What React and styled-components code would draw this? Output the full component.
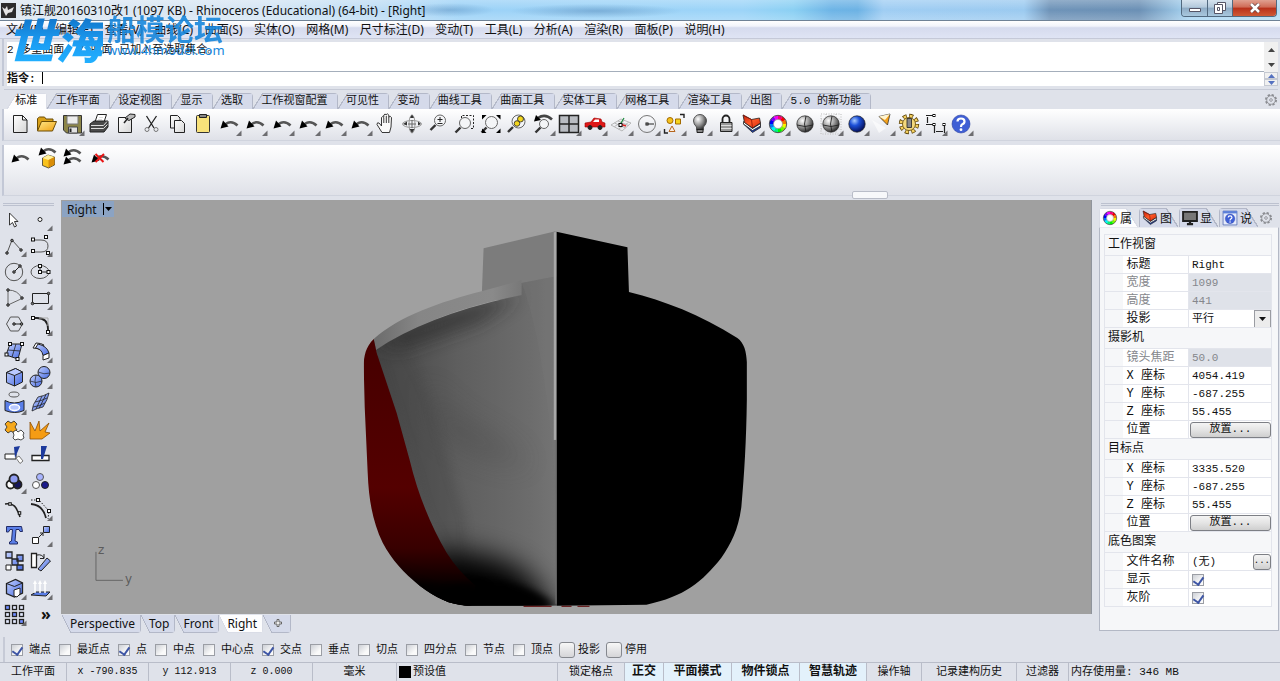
import React, { useState } from 'react'
import styled, { createGlobalStyle, css } from 'styled-components'

const ui = '"Noto Sans", "Noto Sans CJK SC", sans-serif'
const song = '"Liberation Mono", "Noto Sans CJK SC", monospace'

const colors = {
  chrome: '#dfe2ea',
  line: '#b3b8c8',
  tab: '#d5daea',
  ink: '#111',
  blue: '#5b7fe8',
}

const GlobalStyle = createGlobalStyle`
  * {
    box-sizing: border-box;
  }

  body {
    margin: 0;
    background: ${colors.chrome};
    color: ${colors.ink};
    font-family: ${song};
    font-size: 11px;
    overflow: hidden;
  }

  button, input {
    font: inherit;
    color: inherit;
    margin: 0;
    padding: 0;
  }

  button {
    border: 0;
    background: none;
  }
`

const Page = styled.div`
  position: relative;
  display: flex;
  flex-direction: column;
  height: 100vh;
`

const TitleBar = styled.header`
  flex: 0 0 21px;
  display: flex;
  align-items: center;
  gap: 4px;
  padding-left: 1px;
  border-bottom: 1px solid #6f8296;
  font-family: ${ui};
  font-size: 12px;
  background:
    radial-gradient(ellipse at center, rgba(70, 120, 170, 0.35), transparent 70%) 34% 50% / 90px 14px no-repeat,
    radial-gradient(ellipse at center, rgba(70, 120, 170, 0.4), transparent 72%) 46% 60% / 170px 14px no-repeat,
    linear-gradient(rgba(255, 255, 255, 0.25), rgba(255, 255, 255, 0) 50%, rgba(255, 255, 255, 0.2)),
    linear-gradient(90deg, #dde7f0 0%, #d6e6f4 20%, #bcdcf5 30%, #9cd2f7 36%, #9cd4f8 58%, #8bd0f3 62%, #6db4e6 65%, #6cb2e4 67%, #9fcdf3 69%, #9bcaf0 80%, #6e93b8 82%, #6b90b5 89%, #a8d5f3 93%, #b5dcf3 100%);
`

const Title = styled.h1`
  flex: 1;
  margin: 0;
  font-size: 12px;
  font-weight: 400;
  white-space: nowrap;
`

const WindowButtons = styled.div`
  align-self: flex-start;
  display: flex;
  margin-right: 3px;
  border: 1px solid #51697f;
  border-top: 0;
  border-radius: 0 0 4px 4px;
  overflow: hidden;
`

const WindowButton = styled.button`
  width: ${p => (p.$close ? '44px' : '25px')};
  height: 16px;
  display: flex;
  align-items: center;
  justify-content: center;
  border-left: ${p => (p.$first ? '0' : '1px solid #51697f')};
  background: ${p =>
    p.$close
      ? 'linear-gradient(#e0a090, #cf6a55 45%, #b8301a 50%, #cf5a35)'
      : 'linear-gradient(#d5e2ee, #b3c9dc 45%, #8eabc5 50%, #a9c8de)'};
`

const MenuBar = styled.nav`
  flex: 0 0 18px;
  border-bottom: 1px solid #c5c9d8;
  background: linear-gradient(#fff, #f2f4fb 30%, #d6dbee 40%, #dfe4f4);
`

const MenuList = styled.div`
  display: flex;
  justify-content: space-between;
  width: 57%;
  padding: 0 5px 0 6px;
`

const MenuItem = styled.button`
  font-family: ${ui};
  font-size: 12px;
  line-height: 17px;
  white-space: nowrap;
`

const CommandArea = styled.section`
  flex: 0 0 45px;
  display: flex;
  margin-left: 2px;
  padding: 3px 2px 0 3px;
  border-left: 2px solid #c3c8d6;
  font-family: ${song};
  line-height: 14px;
`

const CommandText = styled.div`
  flex: 1;
  display: flex;
  flex-direction: column;
  background: #fff;
`

const History = styled.div`
  flex: 0 0 30px;
  padding-top: 1px;
  border-bottom: 1px solid #a4aebb;
`

const Prompt = styled.label`
  display: flex;
  gap: 6px;
  height: 14px;
  font-weight: 700;

  input {
    flex: 1;
    border: 0;
    outline: 0;
    background: none;
    font-weight: 400;
  }
`

const Caret = styled.span`
  width: 1px;
  height: 12px;
  background: #000;
`

const ScrollColumn = styled.div`
  flex: 0 0 14px;
  display: flex;
  flex-direction: column;
  background: #f0f0f0;
`

const ScrollButton = styled.button`
  flex: 1 1 ${p => (p.$small ? '7px' : '15px')};
  display: flex;
  align-items: center;
  justify-content: center;
  color: ${p => (p.$small ? '#5571c0' : '#444')};
  border: ${p => (p.$small ? '1px solid #c5c9d2' : '0')};

  svg {
    width: 7px;
    height: 4px;
  }
`

const TabBar = styled.div`
  flex: 0 0 23px;
  display: flex;
  justify-content: space-between;
  align-items: flex-end;
  margin: 0 2px;
  padding: 4px 0 0 3px;
  border-left: 2px solid transparent;
  box-shadow: inset 0 3px ${colors.chrome}, inset 0 4px #c6cad6;
`

const Tabs = styled.div`
  display: flex;
  width: 68%;
`

const slanted = css`
  --fill: ${p => (p.$active ? '#fdfdfe' : colors.tab)};
  --line: ${p => (p.$active ? '#d9dce6' : colors.line)};
`

const Tab = styled.button`
  ${slanted}
  flex: 1 1 auto;
  height: 16px;
  padding: 0 10px 0 8px;
  line-height: 16px;
  white-space: nowrap;
  border-radius: 0 4px 0 0;
  background:
    linear-gradient(to bottom right, transparent 46%, var(--line) 47% 53%, var(--fill) 54%) 0 0 / 10px 100% no-repeat,
    linear-gradient(var(--line), var(--line)) 10px 0 / 100% 1px no-repeat,
    linear-gradient(var(--line), var(--line)) 100% 0 / 1px 100% no-repeat,
    linear-gradient(var(--fill), var(--fill)) 10px 0 no-repeat;
`

const GearButton = styled.button`
  width: 14px;
  height: 14px;
  align-self: center;

  svg {
    display: block;
    width: 14px;
    height: 14px;
  }
`

const Toolbar = styled.div`
  position: relative;
  flex: 0 0 ${p => p.$height}px;
  margin: 0 0 4px 2px;
  padding: ${p => p.$top}px 0 0 3px;
  border-left: 2px solid #c3c8d6;
  border-bottom: 1px solid #d0d4de;
  background: linear-gradient(#fff, #f2f3f6 40%, #dfe1e8);
`

const ToolRow = styled.div`
  display: grid;
  grid-template-columns: repeat(37, 1fr);
  width: 76%;
`

const ToolButton = styled.button`
  display: flex;
  align-items: center;
  justify-content: center;

  svg {
    width: 26px;
    height: 26px;
  }
`

const Knob = styled.div`
  position: absolute;
  left: 66%;
  bottom: -4px;
  width: 36px;
  height: 8px;
  margin-left: 6px;
  border: 1px solid #b9bdc8;
  border-radius: 2px;
  background: #f7f8fa;
`

const Body = styled.main`
  flex: 1;
  min-height: 0;
  display: flex;
`

const Palette = styled.aside`
  flex: 0 0 61px;
  padding: 3px 7px 10px 1px;
  display: flex;
  flex-direction: column;
`

const Grip = styled.div`
  height: 3px;
  margin-left: 2px;
  border: 1px solid #bcc1cf;
  border-width: 1px 0;
`

const PaletteGrid = styled.div`
  flex: 1;
  display: grid;
  grid-template-columns: 26px 26px;
  grid-template-rows: repeat(16, 1fr);
`

const More = styled.button`
  padding-left: 12px;
  font-family: ${ui};
  font-size: 16px;
  font-weight: 700;
  line-height: 20px;
`

const Center = styled.section`
  flex: 1;
  min-width: 0;
  display: flex;
  flex-direction: column;
`

const Viewport = styled.div`
  position: relative;
  flex: 1;
  min-height: 0;
  border-right: 1px solid #8f949c;
  background: #a0a0a0;

  > svg {
    display: block;
    width: 100%;
    height: 100%;
  }
`

const ViewportTitle = styled.button`
  position: absolute;
  top: 1px;
  left: 1px;
  display: flex;
  align-items: center;
  gap: 6px;
  height: 16px;
  padding: 0 2px 0 5px;
  background: #8ba3c3;
  font-family: ${ui};
  font-size: 12px;

  svg {
    width: 9px;
    height: 12px;
  }
`

const ViewTabs = styled.div`
  flex: 0 0 23px;
  display: flex;
  padding: 1px 0 4px 1px;
`

const ViewTab = styled.button`
  ${slanted}
  padding: 0 6px 0 8px;
  font-family: ${ui};
  font-size: 12px;
  line-height: 18px;
  border-radius: 0 0 4px 0;
  background:
    linear-gradient(to top right, transparent 46%, var(--line) 47% 53%, var(--fill) 54%) 0 0 / 9px 100% no-repeat,
    linear-gradient(var(--line), var(--line)) 9px 100% / 100% 1px no-repeat,
    linear-gradient(var(--line), var(--line)) 100% 0 / 1px 100% no-repeat,
    linear-gradient(var(--fill), var(--fill)) 9px 0 no-repeat;
`

const Side = styled.aside`
  flex: 0 0 188px;
  padding: 3px 1px 6px 7px;
  display: flex;
  flex-direction: column;
`

const SideTabs = styled.div`
  display: flex;
  gap: 1px;
  padding-top: 2px;
`

const SideTab = styled.button`
  ${slanted}
  flex: 0 0 39px;
  display: flex;
  align-items: center;
  height: 19px;
  padding-left: 1px;
  font-size: 12px;
  white-space: nowrap;
  border-radius: 4px 0 0 0;
  background:
    linear-gradient(to bottom left, transparent 46%, var(--line) 47% 53%, var(--fill) 54%) 100% 0 / 12px 100% no-repeat,
    linear-gradient(var(--line), var(--line)) 0 0 / calc(100% - 12px) 1px no-repeat,
    linear-gradient(var(--line), var(--line)) 0 0 / 1px 100% no-repeat,
    linear-gradient(var(--fill), var(--fill)) 0 0 / calc(100% - 12px) 100% no-repeat;

  svg {
    flex: none;
    width: 20px;
    height: 20px;
  }
`

const Panel = styled.div`
  flex: 1;
  padding: 6px 6px 0 4px;
  border: 1px solid #b3b8c5;
  border-top-color: #e8eaf0;
  background: #f6f7f9;
`

const Table = styled.table`
  width: 100%;
  table-layout: fixed;
  border-collapse: collapse;
  border: 1px solid #e3e5ec;
  font-size: 12px;

  col:first-child {
    width: 18px;
  }

  col:nth-child(2) {
    width: 66px;
  }
`

const GroupHead = styled.th`
  height: 21px;
  padding: 0 0 0 3px;
  text-align: left;
  font-weight: 400;
  line-height: 18px;
`

const Row = styled.tr`
  height: 18px;
  color: ${p => (p.$muted ? '#85878c' : colors.ink)};

  td,
  th {
    height: 18px;
    padding: 0;
    border: 1px solid #e3e5ec;
    background: #fff;
    font-weight: 400;
    line-height: 16px;
    text-align: left;
    white-space: nowrap;
  }

  td:first-child {
    border-right: 0;
    background: #f6f7f9;
  }

  th {
    padding-left: 4px;
    border-left: 0;
  }

  td:last-child {
    background: ${p => (p.$muted ? '#dfe2e9' : '#fff')};
    font-size: 11px;
  }
`

const Value = styled.div`
  display: flex;
  align-items: center;
  height: 17px;
  padding-left: ${p => (p.$flush ? '1px' : '3px')};

  input[type='text'] {
    width: 100%;
    min-width: 0;
    border: 0;
    background: none;
  }
`

const PushButton = styled.button`
  flex: ${p => (p.$small ? '0 0 17px' : '1')};
  height: 16px;
  border: 1px solid #7d7f85;
  border-radius: 3px;
  background: linear-gradient(#f4f4f4, #e4e4e4 50%, #cfcfcf);
  font-size: ${p => (p.$small ? '9px' : '11px')};
  line-height: 13px;
`

const Select = styled.select`
  flex: 1;
  height: 17px;
  padding: 0;
  border: 0;
  appearance: none;
  background: none;
  font: inherit;
  color: inherit;
`

const SelectArrow = styled.span`
  flex: 0 0 17px;
  height: 17px;
  display: flex;
  align-items: center;
  justify-content: center;
  border: 1px solid #9a9ca2;
  border-width: 1px 1px 0 1px;
  background: #ececec;

  svg {
    width: 7px;
    height: 4px;
  }
`

const Check = styled.input.attrs({ type: 'checkbox' })`
  flex: none;
  width: ${p => (p.$big ? '16px' : '12px')};
  height: ${p => (p.$big ? '16px' : '12px')};
  appearance: none;
  display: grid;
  place-items: center;
  border: 1px solid ${p => (p.$big ? '#85888e' : '#9b9ea5')};
  border-radius: ${p => (p.$big ? '3px' : '0')};
  background: ${p =>
    p.$big
      ? 'linear-gradient(#f7f7f7, #d5d5d8)'
      : 'linear-gradient(135deg, #cdd0d6, #fafafa 70%)'};

  &:checked::after {
    content: '';
    width: 5px;
    height: 8px;
    margin-bottom: 2px;
    border: solid #3d55a5;
    border-width: 0 2px 2px 0;
    transform: rotate(35deg);
  }
`

const OsnapBar = styled.div`
  flex: 0 0 25px;
  display: flex;
  align-items: center;
  gap: 8px;
  margin-left: 3px;
  padding: 1px 0 0 6px;
  border-left: 2px solid #c6cad6;
`

const OsnapLabel = styled.label`
  display: flex;
  align-items: center;
  gap: ${p => (p.$big ? '3px' : '6px')};
  margin-left: ${p => (p.$big ? '-2px' : '0')};
  line-height: 16px;
  white-space: nowrap;
`

const StatusBar = styled.footer`
  flex: 0 0 18px;
  display: flex;
  border-top: 1px solid #b9bdc9;
  line-height: 18px;
`

const StatusCell = styled.div`
  flex: ${p => (p.$grow ? '1 1' : '0 0')} ${p => p.$width}px;
  display: flex;
  justify-content: ${p => (p.$left ? 'flex-start' : 'center')};
  align-items: center;
  gap: 2px;
  padding-left: ${p => (p.$left ? '2px' : '0')};
  border-right: ${p => (p.$grow ? '0' : '1px solid #b9bdc9')};
  font-size: ${p => (p.$on ? '12px' : p.$coord ? '10px' : '11px')};
  font-weight: ${p => (p.$on ? 700 : 400)};
  background: ${p => (p.$on ? '#e3f1fb' : 'none')};
  white-space: pre;
`

const Swatch = styled.span`
  width: 12px;
  height: 12px;
  background: #000;
`

const Watermark = styled.div`
  position: absolute;
  top: 13px;
  left: 7px;
  display: flex;
  gap: 4px;
  pointer-events: none;
  font-family: 'Noto Sans CJK SC', sans-serif;
  color: #1787dc;
`

const Brush = styled.span`
  font-size: 48px;
  font-weight: 900;
  line-height: 50px;
  font-style: italic;
  color: transparent;
  background: linear-gradient(#0f6fc4, #1c9df3 60%, #22b0ff);
  background-clip: text;
`

const Forum = styled.div`
  font-size: 29px;
  font-weight: 700;
  line-height: 30px;
  opacity: 0.9;
`

const Site = styled.div`
  font-family: ${ui};
  font-size: 13px;
  line-height: 15px;
`

/* ---------- drawings ---------- */

const Flag = () => <path d="M25.500 19.500V25H20z" fill="#6d6d70" />

const Icon = ({ flag, children }) => (
  <svg viewBox="0 0 26 26" fill="none" stroke="#222" strokeWidth="1">
    {children}
    {flag ? (
      <g stroke="none">
        <Flag />
      </g>
    ) : null}
  </svg>
)

const Defs = () => (
  <svg width="0" height="0" style={{ position: 'absolute' }} aria-hidden="true">
    <defs>
      <radialGradient id="ballGray" cx="0.35" cy="0.3" r="0.75">
        <stop offset="0" stopColor="#fff" />
        <stop offset="0.5" stopColor="#999" />
        <stop offset="1" stopColor="#222" />
      </radialGradient>
      <radialGradient id="ballBlue" cx="0.35" cy="0.3" r="0.75">
        <stop offset="0" stopColor="#a8cbff" />
        <stop offset="0.4" stopColor="#1c50d8" />
        <stop offset="1" stopColor="#020a50" />
      </radialGradient>
      <linearGradient id="steel" x1="0" y1="0" x2="1" y2="1">
        <stop offset="0" stopColor="#c4d2ff" />
        <stop offset="1" stopColor="#4468e0" />
      </linearGradient>
      <linearGradient id="paper" x1="0" y1="0" x2="1" y2="1">
        <stop offset="0" stopColor="#fff" />
        <stop offset="1" stopColor="#d5d5d5" />
      </linearGradient>
      <linearGradient id="gold" x1="0" y1="0" x2="1" y2="1">
        <stop offset="0" stopColor="#ffe98a" />
        <stop offset="1" stopColor="#f0a010" />
      </linearGradient>
      <linearGradient id="ember" x1="0" y1="0" x2="1" y2="1">
        <stop offset="0" stopColor="#c41c08" />
        <stop offset="0.5" stopColor="#ff5a28" />
        <stop offset="1" stopColor="#d82a0c" />
      </linearGradient>
    </defs>
  </svg>
)

const Undo = ({ x = 0, y = 0 }) => (
  <g transform={`translate(${x} ${y})`}>
    <path d="M9 14C12 10.500 17 10 21.500 14.500" stroke="#555" strokeWidth="2.600" />
    <path d="M4.500 17.500L7 9.500L12.500 15.500z" fill="#000" stroke="none" />
  </g>
)

const Lens = ({ cx = 15, cy = 10, r = 5.5 }) => (
  <>
    <circle cx={cx} cy={cy} r={r} fill="#f4f5f7" stroke="#666" />
    <path d={`M${cx - r + 1} ${cy + r - 1}L${cx - r - 4} ${cy + r + 4}`} strokeWidth="2.400" stroke="#333" />
  </>
)

const hues = [0, 30, 60, 90, 120, 150, 180, 210, 240, 270, 300, 330]

const Wheel = () => (
  <g>
    {hues.map(h => (
      <circle
        key={h}
        cx="13"
        cy="13"
        r="6.500"
        stroke={`hsl(${h} 100% 48%)`}
        strokeWidth="4"
        strokeDasharray="3.600 60"
        transform={`rotate(${h - 60} 13 13)`}
      />
    ))}
    <circle cx="13" cy="13" r="8.700" stroke="#333" strokeWidth="0.800" />
    <circle cx="13" cy="13" r="4.500" fill="#fff" stroke="#666" strokeWidth="0.500" />
  </g>
)

const Layers = () => (
  <g strokeWidth="0.800">
    <path d="M4.500 13l9 8.500 8-5v-4l-8 4z" fill="#1d3da5" />
    <path d="M4.500 10.500l9 7 8-5v2.500l-8 4.500-9-6.500z" fill="#fff" />
    <path d="M4 4l8.500 4.500 8-1.500 1 5-8 5-8-5.500z" fill="url(#ember)" />
    <path d="M4 4l8.500 4.500 1 8.500" stroke="#8a1204" />
  </g>
)

const Ball = ({ fill = 'url(#ballGray)', lines }) => (
  <>
    <circle cx="13" cy="13" r="8.200" fill={fill} stroke="#222" strokeWidth="0.700" />
    {lines && <path d="M5 14Q13 17 21 14M14 5Q11 13 14 21" stroke="#222" strokeWidth="0.900" />}
  </>
)

const Gear = ({ color = '#8b8d92', fill = 'none' }) => (
  <g stroke={color} fill={fill}>
    <circle cx="13" cy="13" r="9.500" strokeWidth="3.500" strokeDasharray="4.200 3.260" />
    <circle cx="13" cy="13" r="8" strokeWidth="1.500" />
    <circle cx="13" cy="13" r="2.500" strokeWidth="1.500" />
  </g>
)

const Help = () => (
  <>
    <circle cx="13" cy="13" r="9" fill="#3f5fd5" stroke="#2a3fa0" strokeWidth="0.600" />
    <path d="M9.500 10.500Q9.500 7.500 13 7.500T16.500 10.500Q16.500 12.500 14 13.500Q13 14 13 16" stroke="#fff" strokeWidth="2.200" />
    <circle cx="13" cy="18.700" r="1.400" fill="#fff" stroke="none" />
  </>
)

const Pts = ({ at, s = 3 }) =>
  at.map(([x, y], i) => (
    <rect key={i} x={x - s / 2} y={y - s / 2} width={s} height={s} fill="#fff" stroke="#111" />
  ))

const Dots = ({ at }) =>
  at.map(([x, y], i) => <circle key={i} cx={x} cy={y} r="1.300" fill="#777" stroke="#111" strokeWidth="0.800" />)

const tools = [
  ['新建', 0, <path d="M6.500 4.500h9l4.500 4.500v12.500H6.500zM15.500 4.500v4.500H20" fill="url(#paper)" />],
  ['打开', 0, <>
    <path d="M4.500 19.500v-12l2-1.500h5l1.500 2h7v4" fill="#d9a018" stroke="#6b4c05" />
    <path d="M4.500 20l4-9.500H23.500l-4 9.500z" fill="url(#gold)" stroke="#6b4c05" />
  </>],
  ['保存', 1, <>
    <path d="M4.500 4.500h18v17.500h-15l-3-3z" fill="#8c8548" stroke="#333" />
    <path d="M8 5h11v8H8z" fill="#ececec" stroke="#777" />
    <path d="M9.500 16h9v6h-9z" fill="#e2e2e2" stroke="#444" />
    <path d="M11.500 17.500v3.500" strokeWidth="2" />
  </>],
  ['打印', 0, <>
    <path d="M9 11l2.500-7.500h9L18 11z" fill="#fff" />
    <path d="M4 13l4-3h14v6l-4 5H4z" fill="#4a4a4a" />
    <path d="M5 14.500h12.500l3.500-4M5 17.500h12.500l4-4M13 6.500h4M12 8.500h4" stroke="#ddd" />
  </>],
  ['属性', 0, <>
    <path d="M6.500 6.500h13v15h-13z" fill="url(#paper)" />
    <path d="M13 7l5-4 5 .5v2.500l-6 3.500-2-1z" fill="#bbb" />
    <path d="M12 12l4-5" strokeWidth="1.500" />
  </>],
  ['剪切', 0, <>
    <path d="M8.500 5l7.500 12M18.500 5l-8 12" strokeWidth="1.300" />
    <circle cx="9" cy="18.500" r="2" stroke="#777" />
    <circle cx="18" cy="18.500" r="2" stroke="#777" />
  </>],
  ['复制', 0, <>
    <path d="M6.500 4.500h7l2.500 2.500v10H6.500z" fill="url(#paper)" />
    <path d="M10.500 9.500h7l3 3v9h-10z" fill="url(#paper)" />
  </>],
  ['粘贴', 0, <>
    <rect x="6.500" y="4.500" width="13" height="17" rx="1" fill="#f8e27a" stroke="#333" />
    <path d="M9.500 3.500h7v3h-7z" fill="#888" />
  </>],
  ...['复原', '重做', '多次复原', '多次重做', '复原选取', '重复'].map(n => [n, 1, <Undo />]),
  ['平移', 0, <path d="M9 21.500L4 13.500q0-2.500 2-1.500l2.500 3V6.500q1.200-2 2.300 0V4q1.200-2 2.500 0v-.5q1.300-1.500 2.500.5v2q1.500-1.500 2.700.5l-.5 9.500-1.500 5.500zM10.800 7v5M13.300 5v7M15.800 6v6" fill="#fafafa" strokeWidth="0.900" />],
  ['旋转视图', 0, <>
    <ellipse cx="13" cy="13" rx="9.500" ry="3.500" stroke="#999" />
    <ellipse cx="13" cy="13" rx="3" ry="9" stroke="#999" />
    <path d="M13 9v8M9 13h8" stroke="#666" />
    <path d="M4 13l4-2.500v4zM22 13l-3-2.500v4zM13 22l-2.500-4h5zM13 3.500l-2 3.500h4z" fill="#333" stroke="none" />
  </>],
  ['动态缩放', 0, <><Lens cx={15} cy={9.5} /><path d="M12.500 8.500h5M15 6v5M12.500 12.500h5" /></>],
  ['框选缩放', 0, <><path d="M9.500 10.500v-6h12v13h-4" strokeDasharray="2 1.500" /><Lens cx={13} cy={12} /></>],
  ['缩放至最大范围', 0, <>
    <Lens cx={13.5} cy={11.500} r={6} />
    <path d="M4 4h4.500L4 8.500zM22.500 4v4.500L18 4zM4 22v-4.500L8.500 22zM22.500 22H18l4.500-4.500z" fill="#000" stroke="none" />
  </>],
  ['缩放至选取物件', 0, <>
    <Lens cx={14.5} cy={10.500} r={6.500} />
    <circle cx="16.500" cy="8" r="3" fill="#f3d61d" strokeWidth="0.800" />
    <circle cx="13" cy="12.500" r="2.800" fill="#f3d61d" strokeWidth="0.800" />
  </>],
  ['复原视图', 1, <>
    <path d="M8 7Q15 2 22 8.500" stroke="#444" strokeWidth="2.600" />
    <path d="M4 10.500L6 4l5 5z" fill="#000" stroke="none" />
    <Lens cx={14} cy={13} r={4.500} />
  </>],
  ['四个作业视窗', 1, <path d="M3.500 4.500h19v17h-19zM13 4.500v17M3.500 13h19" fill="#b9bcc2" strokeWidth="1.500" />],
  ['着色', 1, <>
    <path d="M3 16v-4l6-1 3-4 7 1 1 3 3 1v4z" fill="#e01818" stroke="#900" strokeWidth="0.600" />
    <path d="M11 11l2-2.500h4V11z" fill="#fff" stroke="none" />
    <circle cx="8" cy="16.500" r="2" fill="#222" />
    <circle cx="18" cy="16.500" r="2" fill="#222" />
  </>],
  ['设定工作平面', 1, <>
    <path d="M3 14l10-6 10 4-9 8zM6.500 12l11 5M10 10l10.500 4.500M6.500 15.500l10-6M10.500 18l10-6.500" stroke="#aaa" strokeWidth="0.800" />
    <path d="M12 13l6 2" stroke="#d22" strokeWidth="1.400" />
    <path d="M13 12l3-5" stroke="#1a8a3a" strokeWidth="1.200" />
    <Pts at={[[12.5, 14]]} />
  </>],
  ['物件锁点', 1, <><circle cx="12" cy="13" r="8.500" stroke="#777" /><path d="M12 13h7" /><Pts at={[[12, 13]]} s={2} /></>],
  ['选取', 1, <>
    <circle cx="9" cy="9.500" r="3" fill="#f5c21d" stroke="#a36b00" />
    <path d="M14.500 8h5v5h-5z" fill="#f5d41d" stroke="#a36b00" />
    <path d="M8 20.500l3-5.500 3 5.500z" stroke="#b5651d" fill="#fbeee2" />
    <path d="M19 3.500h4V7M3.500 18v4H7" strokeWidth="1.400" />
  </>],
  ['隐藏', 1, <>
    <path d="M6.500 10a6.500 6.500 0 0 1 13 0q0 3-3 6v3h-7v-3q-3-3-3-6z" fill="url(#ballGray)" stroke="#555" />
    <path d="M10 18.500h6v3h-6z" fill="#888" />
  </>],
  ['锁定', 1, <>
    <path d="M9.500 12V8a3.500 3.500 0 0 1 7 0v4" strokeWidth="1.800" />
    <path d="M7.500 11.500h11.500v9H7.500z" fill="#999" stroke="#222" />
    <path d="M8 14.500h10.500M8 17.500h10.500" stroke="#ddd" />
  </>],
  ['图层', 1, <Layers />],
  ['材质', 1, <Wheel />],
  ['着色模式', 0, <Ball lines />],
  ['渲染模式', 1, <><path d="M3 3h20v20H3zM3 8h20M3 13h20M3 18h20M8 3v20M18 3v20" stroke="#bbb" strokeDasharray="1 1.500" /><Ball lines /></>],
  ['渲染', 1, <Ball fill="url(#ballBlue)" />],
  ['聚光灯', 1, <>
    <path d="M2 9l14 8-7 5z" fill="#fff" stroke="none" opacity="0.600" />
    <path d="M9 5.500l11-2.500-2.500 11z" fill="#f3a11c" strokeWidth="0.700" />
    <path d="M9 5.500l11-2.500-5 6z" fill="#fff4d0" stroke="none" />
  </>],
  ['选项', 1, <>
    <circle cx="13" cy="13" r="7.500" stroke="#5b4308" strokeWidth="5.400" strokeDasharray="3.600 2.290" />
    <circle cx="13" cy="13" r="7.500" stroke="#f4d060" strokeWidth="3.800" strokeDasharray="2.400 3.490" strokeDashoffset="-0.600" />
    <circle cx="13" cy="13" r="6.500" stroke="#5b4308" fill="#f4d97c" strokeWidth="0.800" />
    <path d="M11 7.500h4.500v9H11z" fill="#8a8a8a" strokeWidth="0.800" />
  </>],
  ['尺寸标注', 1, <>
    <path d="M4 4.500h8M4 13.500h8M5.500 6v6M12.500 15v7M22.500 15v7M14 20.500h7" strokeWidth="1.200" />
    <Pts at={[[12, 4.500], [12, 13.500], [22, 13.500]]} s={2} />
  </>],
  ['说明', 1, <Help />],
]

const history = [
  ['撤销', <Undo />],
  ['撤销物件', <>
    <Undo x={1} y={-7} />
    <path d="M9.500 13l5.500-3 6.500 2v8l-6 3-6-2.500z" fill="#f9c21c" strokeWidth="0.700" />
    <path d="M9.500 13l5.500-3 6.500 2-6 3z" fill="#fff09a" stroke="none" />
    <path d="M15.500 15v7.500l6-3V12z" fill="#d98d08" stroke="none" />
  </>],
  ['多次撤销', <><Undo y={-6} /><Undo y={2} /></>],
  ['清除撤销', <><Undo x={1} /><path d="M9.500 9l8 8M18 9l-8.500 8" stroke="#e81414" strokeWidth="2" /></>],
]

const box = 'M5.500 8.500l9-4 7 3.500v10l-8 4-8-3.500z'

const palette = [
  ['选取工具', 0, <path d="M8.500 7v12l3-2.500 2 4.500 2-1-2-4.500h3.500z" fill="#fff" strokeWidth="0.900" />],
  ['点', 1, <circle cx="13" cy="13.500" r="2" fill="#fff" />],
  ['多重直线', 1, <><path d="M6 21l5-13 9 10" stroke="#555" /><Dots at={[[6, 21], [11, 8.500], [20, 18]]} /></>],
  ['曲线', 1, <><path d="M6 8h8q7 0 7 6t-7 6H6" stroke="#555" /><Pts at={[[6, 7.500], [19, 5], [6, 19], [21, 21]]} /></>],
  ['圆', 1, <><circle cx="13" cy="13" r="8.700" stroke="#555" /><path d="M13 13l6-6" /><Dots at={[[13, 13], [19, 7]]} /></>],
  ['椭圆', 1, <><ellipse cx="13" cy="13" rx="9" ry="6.500" stroke="#555" /><path d="M13 13V7M13 13h8" /><Pts at={[[13, 7], [13, 13], [21.500, 13]]} /></>],
  ['圆弧', 1, <><path d="M7 20V5q10 0 14 8.500z" stroke="#666" /><Dots at={[[7, 5], [7, 20], [21, 13]]} /></>],
  ['矩形', 1, <><path d="M5.500 8.500h16v10h-16z" /><Dots at={[[21.500, 8.500], [5.500, 18.500]]} /></>],
  ['多边形', 1, <><path d="M5.500 13l4-7h8l4 7-4 7h-8z" stroke="#555" /><path d="M13 13h8" /><Dots at={[[13, 13], [20.500, 13]]} /></>],
  ['曲线圆角', 1, <><path d="M6 7h4q11 0 11 11v3" strokeWidth="1.800" /><path d="M12 7h9v8" stroke="#aaa" /><Pts at={[[6, 7], [21, 21]]} /></>],
  ['曲面', 1, <><path d="M9 6h12l-4 15-12-4z" fill="url(#steel)" /><path d="M15 6l-4 13M7 12l12 1" strokeWidth="0.800" /><Pts at={[[9, 6], [21, 6], [5.500, 16.500], [16.500, 21]]} /></>],
  ['扫掠', 1, <>
    <path d="M6 10l3-5q5 0 8 2l-3.500 5q-3-2-7.500-2z" fill="#fff" />
    <path d="M11 6q9 2 11 9l-6 2.500Q15 11 8.500 10z" fill="url(#steel)" />
    <path d="M22 15v5l-6 2v-4.500z" fill="#fff" />
  </>],
  ['立方体', 1, <><path d={box} fill="url(#steel)" /><path d="M5.500 8.500l8 3 8-3.500-7-3.500z" fill="#b9c9ff" /><path d="M13.500 11.500v10.500" /></>],
  ['布尔运算', 1, <><circle cx="17" cy="8.500" r="6" fill="url(#steel)" /><circle cx="9" cy="17" r="6" fill="url(#steel)" /><path d="M3 17q6 3 12 0M9 11q-2 6 0 12M11 8q6 3 12 1" strokeWidth="0.700" /></>],
  ['投影曲线', 1, <><ellipse cx="13" cy="4.500" rx="5" ry="2.500" stroke="#555" /><path d="M4 10.500q9 5 19 0v10q-9 4-19 0z" fill={colors.blue} /><ellipse cx="13.500" cy="17.500" rx="5" ry="3" stroke="#fff" fill="#b8c8ff" strokeWidth="1.500" /></>],
  ['网格', 1, <><path d="M11 7q6-1 11-4-1 6-6 14-6 1-11 4 0-6 6-14z" fill="url(#steel)" strokeWidth="0.800" /><path d="M8 12q6-1 12-4M6 17q7-1 12-4M15 6L9 19M19 4.500l-7 14" strokeWidth="0.800" /></>],
  ['组合', 0, <>
    <path d="M4 7l3-3 3 2 3-2 3 3-2 3 2 3-3 3-3-2-3 2-3-3 2-3z" fill="#f5a81c" strokeWidth="0.800" />
    <path d="M12 15l3-2 2 2 3-2 3 3-1 2 1 3-3 2-3-1-3 1-2-2 1-3z" fill="#fff" strokeWidth="0.800" />
  </>],
  ['炸开', 0, <path d="M3 22V5l5 9L12 4l1 10 9-8-4 9 5 1-8 6z" fill="#f59c14" stroke="#8a4f05" strokeWidth="0.800" />],
  ['修剪', 0, <><path d="M4 11h11v5H4z" fill="#fff" /><path d="M13 4l6-1-5 12z" fill="#1d3a9c" stroke="none" /><path d="M15 15l3-2 4 5-3 2.500z" fill="#fff" stroke="#777" /></>],
  ['分割', 0, <><path d="M5 12.500h17v5H5z" fill="#fff" strokeWidth="1.300" /><path d="M14 3h6l-4 13h-2z" fill="#1d3a9c" stroke="none" /></>],
  ['群组', 1, <>
    <circle cx="9.500" cy="15.500" r="4" fill="#fff" strokeWidth="1.800" />
    <circle cx="16.500" cy="15.500" r="4" fill="#15155c" strokeWidth="1.800" />
    <circle cx="13" cy="10" r="4.500" fill="#8f9cf0" strokeWidth="1.800" />
  </>],
  ['解散群组', 0, <><circle cx="13" cy="8" r="3.500" fill="#a8b4ff" stroke="#555" /><circle cx="9" cy="16" r="3.500" fill="#fff" stroke="#555" /><circle cx="18" cy="16" r="3.500" fill="#1a1a8c" /></>],
  ['编辑点', 0, <><path d="M4 8q8-1 11 4t4 9" strokeWidth="1.500" /><Pts at={[[9, 8], [18.500, 17]]} s={2.5} /></>],
  ['控制点', 1, <><path d="M4 8q12 1 15 14" strokeWidth="1.800" /><path d="M4 4h8l10 11-1 8" strokeDasharray="1.500 1.500" /><Pts at={[[11, 4], [22, 15]]} /></>],
  ['文字', 0, <path d="M5.500 4.500h15l1 5h-2.500l-1-2h-3L14 19l2.500 1v2h-8v-2l2-1 1-11.500h-2.500L7.500 10H5.500z" fill={colors.blue} stroke="#222c66" />],
  ['移动', 1, <><path d="M16.500 4.500h6v6h-6z" fill="url(#steel)" /><path d="M5.500 15.500h6v6h-6z" fill="#fff" /><path d="M12 15l4-4M13 11h3v3" /></>],
  ['阵列', 0, <><path d="M5 17h5v5H5z" fill="#fff" /><path d="M5 4h6v6H5zM16 7h6v6h-6zM11 11h6v6h-6zM16 17h6v5h-6z" fill="url(#steel)" strokeWidth="1.300" /></>],
  ['旋转', 0, <><path d="M4.500 5.500h5v14h-5z" fill="#fff" strokeWidth="1.300" /><path d="M11 21L20 10l3.500 3L14 23z" fill="url(#steel)" /><path d="M10 7q5-1 7 3M17 6v4.500h-4" /></>],
  ['实体编辑', 1, <><path d={box} fill="url(#steel)" strokeWidth="1.300" /><path d="M5.500 8.500l8 3 8-3.500" /><path d="M13 15l6-2v6l-3 3-3-1z" fill="#fff" /></>],
  ['挤出', 1, <><path d="M4 20l5-3h14l-4 4z" fill={colors.blue} /><path d="M8 18V8M13 18V8M18 18V8" stroke="#fff" strokeWidth="1.500" /><path d="M6 9l2-4 2 4zM11 9l2-4 2 4zM16 9l2-4 2 4z" fill="#fff" stroke="none" /></>],
  ['矩形阵列', 1, [4, 11, 18].map(x => [4, 11, 18].map(y => (
    <rect key={`${x}-${y}`} x={x + 0.5} y={y + 0.5} width="4" height="4" fill={x === y ? '#6f8cff' : '#e4eaff'} stroke="#222" strokeWidth="1.300" />
  )))],
]

const Triangle = ({ up }) => (
  <svg viewBox="0 0 7 4" fill="currentColor">
    <path d={up ? 'M0 4L3.500 0L7 4z' : 'M0 0H7L3.500 4z'} />
  </svg>
)

const Hull = () => (
  <svg viewBox="61 200 1031 414" preserveAspectRatio="xMidYMid meet" role="img" aria-label="Right">
    <defs>
      <linearGradient id="side" x1="375" y1="0" x2="557" y2="0" gradientUnits="userSpaceOnUse">
        <stop offset="0" stopColor="#444" />
        <stop offset="0.450" stopColor="#5e5e5e" />
        <stop offset="0.850" stopColor="#6c6c6c" />
        <stop offset="1" stopColor="#747474" />
      </linearGradient>
      <linearGradient id="red" x1="0" y1="340" x2="0" y2="585" gradientUnits="userSpaceOnUse">
        <stop offset="0" stopColor="#460000" />
        <stop offset="0.600" stopColor="#540000" />
        <stop offset="0.850" stopColor="#380000" />
        <stop offset="1" stopColor="#080000" />
      </linearGradient>
      <linearGradient id="rim" x1="375" y1="0" x2="522" y2="0" gradientUnits="userSpaceOnUse">
        <stop offset="0" stopColor="#6c6c6c" />
        <stop offset="0.300" stopColor="#868686" />
        <stop offset="0.800" stopColor="#8a8a8a" />
        <stop offset="1" stopColor="#787878" />
      </linearGradient>
      <filter id="soft" x="-40%" y="-60%" width="180%" height="220%">
        <feGaussianBlur stdDeviation="9" />
      </filter>
      <filter id="softer" x="-40%" y="-60%" width="180%" height="220%">
        <feGaussianBlur stdDeviation="14" />
      </filter>
      <filter id="fine" x="-40%" y="-60%" width="180%" height="220%">
        <feGaussianBlur stdDeviation="4" />
      </filter>
      <clipPath id="shell">
        <path d="M374 339Q376 347 376 350Q430 314 522 295L522 283L557 276V606H468C440 602 383 560 377 520L374 400z" />
      </clipPath>
      <clipPath id="port">
        <path d="M374 339C366 347 364 356 364 367L365 407L368 473C369 500 373 522 383 543C392 560 404 573 420 586C436 598 450 605 468 606H557V339z" />
      </clipPath>
    </defs>
    <path d="M484 248L556 231V300H482z" fill="#7c7c7c" />
    <path d="M483 291C440 302 400 316 374 339L376 350C420 322 470 304 522 295V280z" fill="url(#rim)" />
    <g clipPath="url(#shell)">
      <path d="M360 270H557V610H360z" fill="url(#side)" />
      <path d="M372 345Q430 310 520 296L480 322L400 350z" fill="#2a2a2a" opacity="0.700" filter="url(#soft)" />
      <path d="M522 283L557 270V500Q545 340 522 283z" fill="#787878" opacity="0.300" />
      <path d="M440 430Q480 460 530 465L490 435Q450 420 425 380z" fill="#444" opacity="0.400" filter="url(#softer)" />
      <path d="M377 353L400 337Q425 380 433 407Q450 470 466 518L470 590L447 553L427 513L397 413z" fill="#444" opacity="0.300" filter="url(#fine)" />
      <path d="M370 655V570Q440 540 500 560Q535 570 552 612V655z" fill="#000" filter="url(#softer)" />
      <path d="M400 640V588Q515 560 560 618V640z" fill="#000" filter="url(#fine)" />
    </g>
    <g clipPath="url(#port)">
      <path d="M374 339L377 353L397 413L410 460Q422 510 447 553Q459 572 476 586L470 610H355V335z" fill="url(#red)" />
      <path d="M340 560Q400 592 470 588V640H340z" fill="#000" filter="url(#fine)" />
      <path d="M355 540Q400 600 480 594V650H340z" fill="#000" opacity="0.700" filter="url(#soft)" />
      <path d="M440 606V590Q520 576 557 606z" fill="#000" filter="url(#fine)" />
    </g>
    <path d="M557 231.500L628 247L629.500 292C665 301 700 314 738 338C745 343 747 352 747.500 362V400C747 440 745 475 742 507C739 530 732 543 722 558C703 582 685 597 647 605L557 606z" fill="#000" />
    <path d="M555.500 232V440" stroke="#a8a8a8" strokeWidth="2.500" />
    <path d="M556.500 440V604" stroke="#6e6e6e" strokeWidth="1" />
    <path d="M524 606.500h28M562 606.500h10M578 606.500h12" stroke="#5a0000" />
    <path d="M96 552V580.500H123" fill="none" stroke="#666" strokeWidth="1" />
    <g fill="#5c5c5c" fontFamily="DejaVu Sans" fontSize="12">
      <text x="98" y="554">z</text>
      <text x="125" y="583">y</text>
    </g>
  </svg>
)

/* ---------- data ---------- */

const menus = [
  '文件(F)', '编辑(E)', '查看(V)', '曲线(C)', '曲面(S)', '实体(O)', '网格(M)',
  '尺寸标注(D)', '变动(T)', '工具(L)', '分析(A)', '渲染(R)', '面板(P)', '说明(H)',
]

const toolTabs = [
  '标准', '工作平面', '设定视图', '显示', '选取', '工作视窗配置', '可见性', '变动',
  '曲线工具', '曲面工具', '实体工具', '网格工具', '渲染工具', '出图', '5.0 的新功能',
]

const groups = [
  {
    title: '工作视窗',
    rows: [
      { label: '标题', value: 'Right' },
      { label: '宽度', value: '1099', muted: true },
      { label: '高度', value: '441', muted: true },
      { label: '投影', value: '平行', kind: 'select' },
    ],
  },
  {
    title: '摄影机',
    rows: [
      { label: '镜头焦距', value: '50.0', muted: true },
      { label: 'X 座标', value: '4054.419' },
      { label: 'Y 座标', value: '-687.255' },
      { label: 'Z 座标', value: '55.455' },
      { label: '位置', value: '放置...', kind: 'button' },
    ],
  },
  {
    title: '目标点',
    rows: [
      { label: 'X 座标', value: '3335.520' },
      { label: 'Y 座标', value: '-687.255' },
      { label: 'Z 座标', value: '55.455' },
      { label: '位置', value: '放置...', kind: 'button' },
    ],
  },
  {
    title: '底色图案',
    rows: [
      { label: '文件名称', value: '(无)', kind: 'file' },
      { label: '显示', kind: 'check' },
      { label: '灰阶', kind: 'check' },
    ],
  },
]

const osnaps = [
  ['端点', true], ['最近点'], ['点', true], ['中点'], ['中心点'], ['交点', true],
  ['垂点'], ['切点'], ['四分点'], ['节点'], ['顶点'],
]

const PropertyField = ({ row, id }) => {
  switch (row.kind) {
    case 'select':
      return (
        <Value>
          <Select id={id}>
            <option>{row.value}</option>
          </Select>
          <SelectArrow>
            <Triangle />
          </SelectArrow>
        </Value>
      )
    case 'button':
      return (
        <Value $flush>
          <PushButton id={id}>{row.value}</PushButton>
        </Value>
      )
    case 'file':
      return (
        <Value>
          <input type="text" id={id} defaultValue={row.value} />
          <PushButton $small>...</PushButton>
        </Value>
      )
    case 'check':
      return (
        <Value>
          <Check id={id} defaultChecked />
        </Value>
      )
    default:
      return (
        <Value>
          <input type="text" id={id} defaultValue={row.value} readOnly={row.muted} />
        </Value>
      )
  }
}

const Properties = () => (
  <Table>
    <colgroup>
      <col />
      <col />
      <col />
    </colgroup>
    {groups.map((group, g) => (
      <tbody key={group.title}>
        <tr>
          <GroupHead colSpan={3}>{group.title}</GroupHead>
        </tr>
        {group.rows.map((row, i) => (
          <Row key={row.label} $muted={row.muted}>
            <td />
            <th>
              <label htmlFor={`prop-${g}-${i}`}>{row.label}</label>
            </th>
            <td>
              <PropertyField row={row} id={`prop-${g}-${i}`} />
            </td>
          </Row>
        ))}
      </tbody>
    ))}
  </Table>
)

export default function App() {
  const [tab, setTab] = useState('标准')
  const [view, setView] = useState('Right')

  return (
    <Page>
      <GlobalStyle />
      <Defs />
      <TitleBar>
        <svg width="15" height="15" viewBox="0 0 15 15">
          <path d="M0 0h15v15H0z" fill="#2c2c2c" />
          <path d="M1 4l3 2 2-3 1 4 6-3-2 5-4 1-2 3-2-4z" fill="#e4e4e4" />
        </svg>
        <Title>镇江舰20160310改1 (1097 KB) - Rhinoceros (Educational) (64-bit) - [Right]</Title>
        <WindowButtons>
          <WindowButton $first aria-label="最小化">
            <svg width="12" height="12" viewBox="0 0 12 12">
              <path d="M0.500 6.500h11v3h-11z" fill="#fff" stroke="#556" />
            </svg>
          </WindowButton>
          <WindowButton aria-label="还原">
            <svg width="12" height="12" viewBox="0 0 12 12" fill="#fff" stroke="#556">
              <path d="M3.500 0.500h8v8h-8z" />
              <path d="M0.500 2.500h8v9h-8zM3.500 5.500h2v3h-2z" />
            </svg>
          </WindowButton>
          <WindowButton $close aria-label="关闭">
            <svg width="12" height="10" viewBox="0 0 12 10">
              <path d="M2 1l8 8M10 1L2 9" stroke="#644" strokeWidth="4" />
              <path d="M2 1l8 8M10 1L2 9" stroke="#fff" strokeWidth="2.500" />
            </svg>
          </WindowButton>
        </WindowButtons>
      </TitleBar>

      <MenuBar>
        <MenuList>
          {menus.map(m => (
            <MenuItem key={m}>{m}</MenuItem>
          ))}
        </MenuList>
      </MenuBar>

      <CommandArea>
        <CommandText>
          <History>2 多重曲面, 7 曲面 已加入至选取集合。</History>
          <Prompt>
            指令:
            <Caret />
            <input type="text" aria-label="指令" />
          </Prompt>
        </CommandText>
        <ScrollColumn>
          <ScrollButton aria-label="向上"><Triangle up /></ScrollButton>
          <ScrollButton aria-label="向下"><Triangle /></ScrollButton>
          <ScrollButton $small aria-label="上一个"><Triangle up /></ScrollButton>
          <ScrollButton $small aria-label="下一个"><Triangle /></ScrollButton>
        </ScrollColumn>
      </CommandArea>

      <TabBar>
        <Tabs>
          {toolTabs.map(t => (
            <Tab key={t} $active={t === tab} onClick={() => setTab(t)}>
              {t}
            </Tab>
          ))}
        </Tabs>
        <GearButton aria-label="选项">
          <Icon><Gear /></Icon>
        </GearButton>
      </TabBar>

      <Toolbar $height={32} $top={2}>
        <ToolRow>
          {tools.map(([name, flag, art]) => (
            <ToolButton key={name} aria-label={name}>
              <Icon flag={flag}>{art}</Icon>
            </ToolButton>
          ))}
        </ToolRow>
      </Toolbar>
      <Toolbar $height={51} $top={0}>
        <ToolRow>
          {history.map(([name, art]) => (
            <ToolButton key={name} aria-label={name}>
              <Icon>{art}</Icon>
            </ToolButton>
          ))}
        </ToolRow>
        <Knob />
      </Toolbar>

      <Body>
        <Palette>
          <Grip />
          <PaletteGrid>
            {palette.map(([name, flag, art]) => (
              <ToolButton key={name} aria-label={name}>
                <Icon flag={flag}>{art}</Icon>
              </ToolButton>
            ))}
            <More aria-label="更多">»</More>
          </PaletteGrid>
        </Palette>

        <Center>
          <Viewport>
            <Hull />
            <ViewportTitle>
              Right
              <svg viewBox="0 0 9 12">
                <path d="M0.500 0v12" stroke="#000" />
                <path d="M2 4h7L5.500 8z" />
              </svg>
            </ViewportTitle>
          </Viewport>
          <ViewTabs>
            {['Perspective', 'Top', 'Front', 'Right'].map(v => (
              <ViewTab key={v} $active={v === view} onClick={() => setView(v)}>
                {v}
              </ViewTab>
            ))}
            <ViewTab aria-label="新增">
              <svg width="14" height="10" viewBox="0 0 14 10">
                <path d="M6 1.500h2v2.500h2.500v2H8v2.500H6V6H3.500V4H6z" fill="#eee" stroke="#666" />
              </svg>
            </ViewTab>
          </ViewTabs>
        </Center>

        <Side>
          <Grip />
          <SideTabs>
            <SideTab $active><Icon><Wheel /></Icon>属</SideTab>
            <SideTab><Icon><Layers /></Icon>图</SideTab>
            <SideTab>
              <Icon>
                <path d="M4 5h18v12H4z" fill="#777" strokeWidth="2.500" />
                <path d="M9 21h8M13 17v4" strokeWidth="3" />
              </Icon>
              显
            </SideTab>
            <SideTab>
              <Icon>
                <path d="M4 4h18v18H4z" fill="#e6ebfa" stroke="#5068b0" />
                <path d="M4 4h18v3H4z" fill="#5c7fd8" stroke="none" />
                <g transform="translate(4 5) scale(0.700)"><Help /></g>
              </Icon>
              说
            </SideTab>
            <GearButton aria-label="面板选项">
              <Icon><Gear /></Icon>
            </GearButton>
          </SideTabs>
          <Panel>
            <Properties />
          </Panel>
        </Side>
      </Body>

      <OsnapBar>
        {osnaps.map(([name, on]) => (
          <OsnapLabel key={name}>
            <Check defaultChecked={on} />
            {name}
          </OsnapLabel>
        ))}
        {['投影', '停用'].map(name => (
          <OsnapLabel key={name} $big>
            <Check $big />
            {name}
          </OsnapLabel>
        ))}
      </OsnapBar>

      <StatusBar>
        <StatusCell $width={67}>工作平面</StatusCell>
        <StatusCell $width={82} $coord>x -790.835</StatusCell>
        <StatusCell $width={82} $coord>y 112.913</StatusCell>
        <StatusCell $width={82} $coord>z 0.000</StatusCell>
        <StatusCell $width={84}>毫米</StatusCell>
        <StatusCell $width={161} $left>
          <Swatch />
          预设值
        </StatusCell>
        <StatusCell $width={67}>锁定格点</StatusCell>
        <StatusCell $width={39} $on>正交</StatusCell>
        <StatusCell $width={68} $on>平面模式</StatusCell>
        <StatusCell $width={68} $on>物件锁点</StatusCell>
        <StatusCell $width={67} $on>智慧轨迹</StatusCell>
        <StatusCell $width={55}>操作轴</StatusCell>
        <StatusCell $width={95}>记录建构历史</StatusCell>
        <StatusCell $width={52}>过滤器</StatusCell>
        <StatusCell $width={100} $grow $left>内存使用量: 346 MB</StatusCell>
      </StatusBar>

      <Watermark>
        <Brush>世海</Brush>
        <div>
          <Forum>船模论坛</Forum>
          <Site>www.4hmodel.com</Site>
        </div>
      </Watermark>
    </Page>
  )
}
